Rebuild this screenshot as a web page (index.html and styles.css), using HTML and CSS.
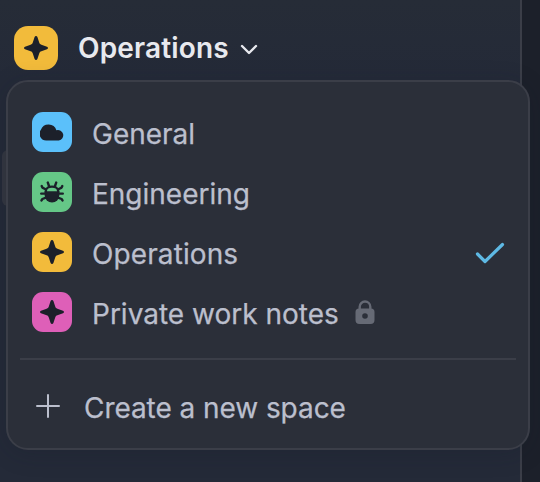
FILE: index.html
```html
<!DOCTYPE html>
<html lang="en">
<head>
<meta charset="utf-8">
<title>Operations</title>
<link rel="stylesheet" href="styles.css">
</head>
<body>
<svg class="defs" width="0" height="0" aria-hidden="true">
  <symbol id="star" viewBox="0 0 24 24"><path d="M10.6 1C11.1-.3 12.9-.3 13.4 1L15.2 6.6C15.6 7.8 16.2 8.4 17.4 8.8L23 10.7C24.3 11.2 24.3 12.8 23 13.3L17.4 15.2C16.2 15.6 15.6 16.2 15.2 17.4L13.4 23C12.9 24.3 11.1 24.3 10.6 23L8.8 17.4C8.4 16.2 7.8 15.6 6.6 15.2L1 13.3C-.3 12.8-.3 11.2 1 10.7L6.6 8.8C7.8 8.4 8.4 7.8 8.8 6.6Z"/></symbol>
</svg>
<div class="sidebar">
  <header class="header">
    <span class="tile tile-large yellow"><svg width="24" height="24"><use href="#star"/></svg></span>
    <h1 class="title">Operations</h1>
    <svg class="chevron" width="18" height="12" viewBox="0 0 18 12"><path d="M2 2L9 9L16 2"/></svg>
  </header>
  <div class="handle"></div>
  <div class="menu">
    <ul class="spaces">
      <li class="space"><span class="tile blue"><svg width="24" height="24" viewBox="0 0 24 24"><path d="M6.5 20.5A6.7 6.7 0 0 1 .9 9.8A8.2 8.2 0 0 1 16.4 10.2A5.3 5.3 0 1 1 18.8 20.5Z"/></svg></span><span class="label">General</span></li>
      <li class="space"><span class="tile green"><svg width="24" height="24" viewBox="0 0 24 24"><path d="M4.7 11.2H19.3V15.3A7.3 7.3 0 0 1 4.7 15.3Z"/><path class="legs" d="M7.8 2.6L9 6M16.2 2.6L15 6M1.7 6L2.4 7.6L5.6 9.2M22.3 6L21.6 7.6L18.4 9.2M1.2 13.6H5M22.8 13.6H19M1.5 20.4L2.4 19L6 17.6M22.5 20.4L21.6 19L18 17.6M5.8 12V11C6.2 5.2 17.8 5.2 18.2 11V12"/></svg></span><span class="label">Engineering</span></li>
      <li class="space"><span class="tile yellow"><svg width="24" height="24"><use href="#star"/></svg></span><span class="label operations">Operations</span><svg class="check" width="30" height="24" viewBox="0 0 30 24"><path d="M2.5 13L10 20.5L27.5 3.5"/></svg></li>
      <li class="space"><span class="tile pink"><svg width="24" height="24"><use href="#star"/></svg></span><span class="label">Private work notes</span><svg class="lock" width="20" height="24" viewBox="0 0 20 24"><path class="shackle" d="M4.7 10V6.8A5.3 5.3 0 0 1 15.3 6.8V10"/><path fill-rule="evenodd" d="M4 8.5H16Q19.5 8.5 19.5 12V20Q19.5 24 15.5 24H4.5Q.5 24 .5 20V12Q.5 8.5 4 8.5ZM10 13.2A2.8 2.8 0 1 0 10 18.8A2.8 2.8 0 1 0 10 13.2Z"/></svg></li>
    </ul>
    <div class="create"><svg class="plus" width="24" height="24" viewBox="0 0 24 24"><path d="M12 1V23M1 12H23"/></svg><span class="label create-label">Create a new space</span></div>
  </div>
</div>
</body>
</html>
```
FILE: styles.css
```css
* { box-sizing: border-box; }
body {
  margin: 0;
  height: 482px;
  overflow: hidden;
  background: #1c202a;
  font-family: Inter, "Liberation Sans", sans-serif;
}
.defs { position: absolute; }
.sidebar {
  position: relative;
  width: 522px;
  height: 482px;
  padding-top: 26px;
  border-right: 2px solid #3b3e48;
  background: linear-gradient(#262c37, #242a38 80px, #242a38);
}
.header {
  display: flex;
  align-items: center;
  height: 44px;
  padding-left: 14px;
}
.title {
  width: 150px;
  margin: 0 0 0 20px;
  color: #e8e9ee;
  font-size: 28px;
  font-weight: 600;
  letter-spacing: .15px;
  line-height: 45px;
  white-space: nowrap;
}
.chevron { margin: 3px 0 0 12px; }
.chevron path, .plus path, .check path {
  fill: none;
  stroke: #e8e9ee;
  stroke-width: 2.4;
  stroke-linecap: round;
  stroke-linejoin: round;
}
.tile {
  display: flex;
  flex: none;
  align-items: center;
  justify-content: center;
  width: 40px;
  height: 40px;
  border-radius: 11px;
  fill: #1c202a;
}
.tile-large { width: 44px; height: 44px; border-radius: 14px; }
.yellow { background: #f2bb3b; }
.blue { background: #5bc0fa; }
.green { background: #65c787; }
.pink { background: #de5fb8; }
.legs {
  fill: none;
  stroke: #1c202a;
  stroke-width: 2.4;
  stroke-linecap: round;
  stroke-linejoin: round;
}
.handle {
  position: absolute;
  top: 150px;
  left: 2px;
  width: 12px;
  height: 56px;
  border-radius: 7px;
  background: #343741;
}
.menu {
  position: relative;
  width: 524px;
  height: 370px;
  margin: 10px 0 0 6px;
  padding: 20px 12px 0;
  border: 2px solid #3b3e48;
  border-radius: 22px;
  background: #2b2f39;
  box-shadow: 0 4px 24px rgba(20, 25, 40, .2);
}
.spaces {
  margin: 0;
  padding: 0 12px 16px;
  border-bottom: 2px solid #3b3e48;
  list-style: none;
}
.space {
  display: flex;
  align-items: center;
  height: 60px;
}
.space .tile { margin-top: -1px; }
.label {
  margin-left: 20px;
  padding-top: 4px;
  color: #bbbfcd;
  font-size: 28px;
  -webkit-text-stroke: .25px #bbbfcd;
  line-height: 36px;
  white-space: nowrap;
}
.operations { letter-spacing: .1px; }
.check { margin: 1px -1px 0 auto; }
.check path { stroke: #5eb9e4; stroke-width: 3.2; }
.lock { margin-left: 16px; fill: #666a75; }
.shackle { fill: none; stroke: #666a75; stroke-width: 2.4; }
.create {
  display: flex;
  align-items: center;
  height: 90px;
  padding: 2px 0 0 16px;
}
.plus { margin-top: -1px; }
.plus path { stroke: #bbbfcd; stroke-width: 2; }
.create-label { margin-left: 24px; letter-spacing: -.06px; }
```
